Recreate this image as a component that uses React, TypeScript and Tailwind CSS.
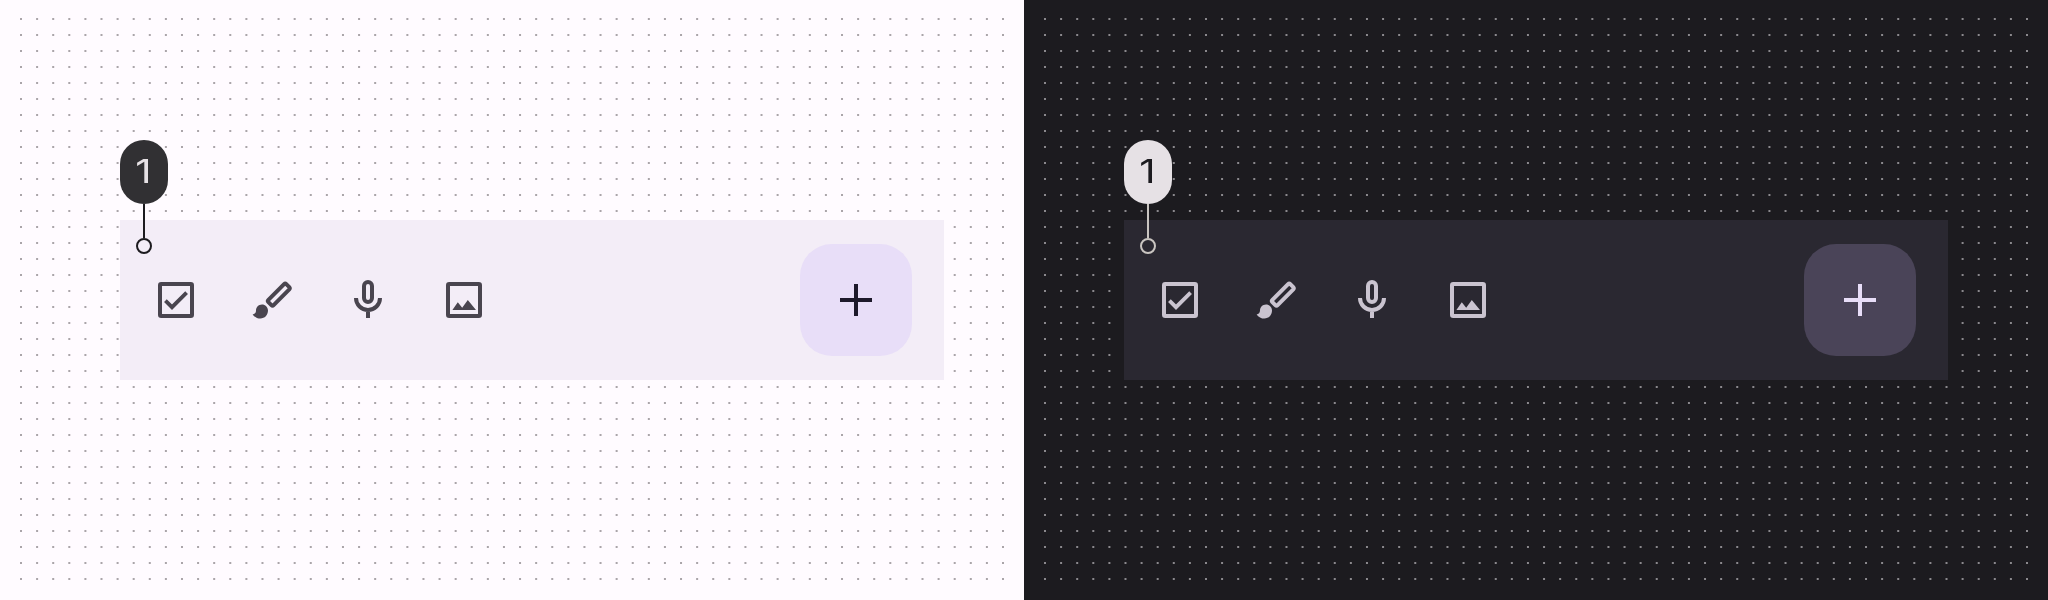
type Theme = {
  page: string;
  inset: string;
  dots: string;
  bar: string;
  icon: string;
  fab: string;
  plus: string;
  pill: string;
  label: string;
  marker: string;
};

const light: Theme = {
  page: "bg-[#fffbff]",
  inset: "pl-[120px]",
  dots: "text-[#aaa5a9]",
  bar: "bg-[#f3edf7]",
  icon: "text-[#49454f]",
  fab: "bg-[#e8def8]",
  plus: "text-[#1d192b]",
  pill: "bg-[#313033]",
  label: "text-[#e6e1e5]",
  marker: "text-[#1c1b1f]",
};

const dark: Theme = {
  page: "bg-[#1c1b1f]",
  inset: "pl-[100px]",
  dots: "text-[#8b898d]",
  bar: "bg-[#2a2831]",
  icon: "text-[#cac4d0]",
  fab: "bg-[#4a4458]",
  plus: "text-[#e8def8]",
  pill: "bg-[#e6e1e5]",
  label: "text-[#1c1b1f]",
  marker: "text-[#c9c5c1]",
};

const columns = Array.from({ length: 62 }, (_, i) => 20 + (i * 982) / 61);

function DotGrid({ id, color }: { id: string; color: string }) {
  return (
    <svg className={`absolute inset-0 h-[600px] w-[1024px] ${color}`} aria-hidden="true">
      <defs>
        <g id={id} fill="currentColor">
          {columns.map((x) => (
            <rect key={x} x={x} y="0" width="2" height="2" />
          ))}
        </g>
      </defs>
      {Array.from({ length: 36 }, (_, row) => (
        <use key={row} href={`#${id}`} y={18 + row * 16} />
      ))}
    </svg>
  );
}

function CheckBoxIcon() {
  return (
    <svg viewBox="0 0 24 24" className="size-12" fill="none" stroke="currentColor" strokeWidth="2">
      <rect x="4" y="4" width="16" height="16" rx="0.6" />
      <path strokeWidth="1.9" d="M6.7 12.3 10 15.6 17.3 8.3" />
    </svg>
  );
}

function BrushIcon() {
  return (
    <svg viewBox="0 0 24 24" className="size-12" fill="currentColor">
      <path d="M7 14.2C5.2 14.2 4 15.6 4 17.2C4 18.4 3.3 19 2.3 19.2C3.2 20.5 4.7 21.3 6.2 21.3C8.4 21.3 10 19.5 10 17.3C10 15.5 8.6 14.2 7 14.2Z" />
      <path
        fill="none"
        stroke="currentColor"
        strokeWidth="2"
        strokeLinejoin="round"
        d="M18.05 4.05Q18.6 3.5 19.15 4.05L20.65 5.55Q21.2 6.1 20.65 6.65L12.8 14.55Q12.25 15.1 11.7 14.55L10.2 13.05Q9.65 12.5 10.2 11.95Z"
      />
    </svg>
  );
}

function MicIcon() {
  return (
    <svg viewBox="0 0 24 24" className="size-12" fill="none" stroke="currentColor" strokeWidth="2">
      <rect x="10" y="3" width="4" height="10" rx="2" />
      <path d="M6 11a6 6 0 0 0 12 0M12 17v4" />
    </svg>
  );
}

function ImageIcon() {
  return (
    <svg viewBox="0 0 24 24" className="size-12" fill="none" stroke="currentColor" strokeWidth="2">
      <rect x="4" y="4" width="16" height="16" rx="0.6" />
      <path fill="currentColor" stroke="none" d="M6.2 17 8.9 13.1 11.1 15.9 13.9 12 18 17Z" />
    </svg>
  );
}

function Callout({ theme }: { theme: Theme }) {
  return (
    <div className={`absolute -top-20 left-0 flex w-12 flex-col items-center ${theme.marker}`}>
      <div
        className={`flex h-16 w-12 items-center justify-center rounded-3xl font-['Inter',sans-serif] text-[32px] leading-none antialiased ${theme.pill} ${theme.label}`}
      >
        <span className="block -translate-y-[0.5px] scale-x-125 will-change-transform">1</span>
      </div>
      <div className="h-[34px] w-0.5 bg-current" />
      <div className="size-4 rounded-full border-2 border-current" />
    </div>
  );
}

function Scene({ id, theme }: { id: string; theme: Theme }) {
  return (
    <section className={`relative h-[600px] w-[1024px] pt-[220px] ${theme.inset} ${theme.page}`}>
      <DotGrid id={id} color={theme.dots} />
      <div className={`relative flex h-40 w-[824px] items-center justify-between px-8 ${theme.bar}`}>
        <div className={`flex gap-12 ${theme.icon}`}>
          <CheckBoxIcon />
          <BrushIcon />
          <MicIcon />
          <ImageIcon />
        </div>
        <button
          aria-label="Add"
          className={`flex size-28 items-center justify-center rounded-[32px] ${theme.fab} ${theme.plus}`}
        >
          <svg viewBox="0 0 24 24" className="size-12" stroke="currentColor" strokeWidth="2">
            <path d="M4 12h16M12 4v16" />
          </svg>
        </button>
        <Callout theme={theme} />
      </div>
    </section>
  );
}

export default function App() {
  return (
    <main className="flex h-[600px] w-[2048px] overflow-hidden">
      <Scene id="dots-light" theme={light} />
      <Scene id="dots-dark" theme={dark} />
    </main>
  );
}
